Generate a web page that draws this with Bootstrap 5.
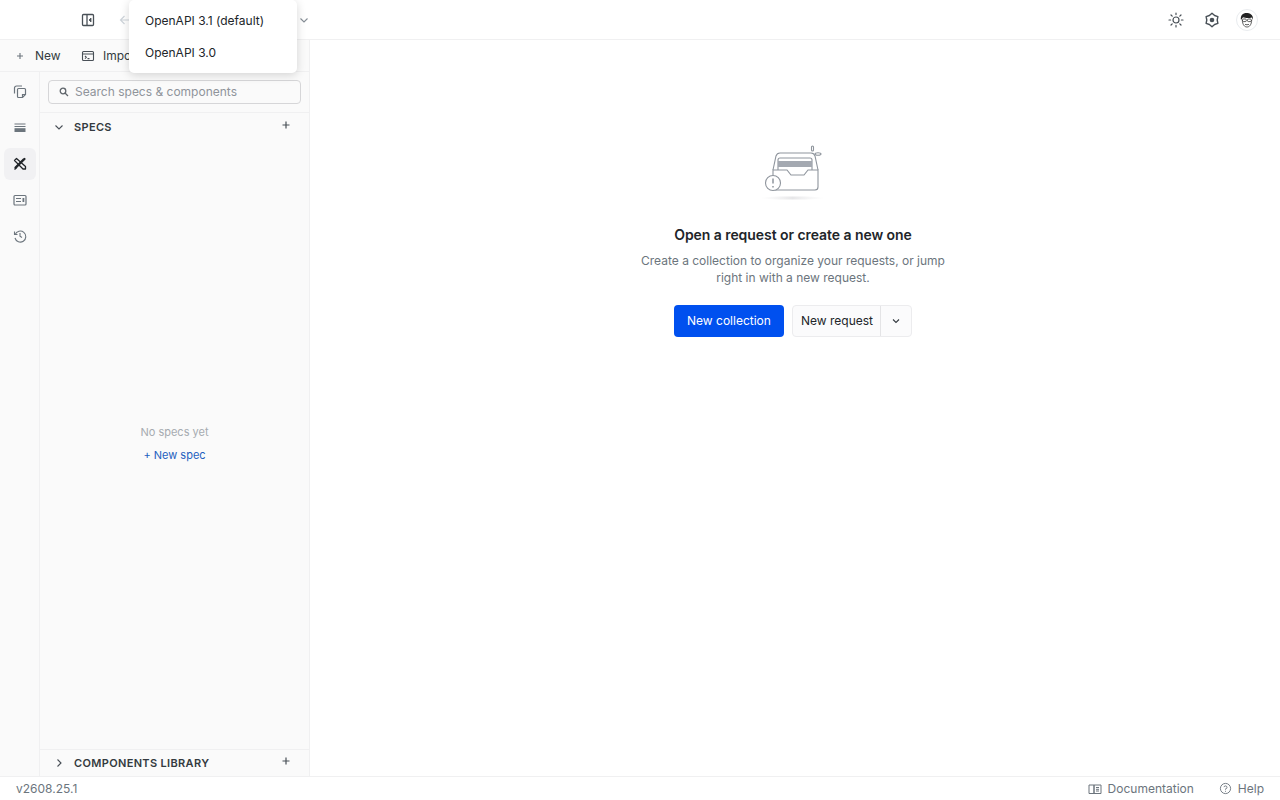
<!DOCTYPE html>
<html lang="en">
<head>
<meta charset="utf-8">
<title>Bruno</title>
<link href="https://cdn.jsdelivr.net/npm/bootstrap@5.3.0/dist/css/bootstrap.min.css" rel="stylesheet">
<style>
html,body{height:100%;overflow:hidden}
body{font-family:Inter,"Liberation Sans",sans-serif;font-size:12px;color:#343a40;background:#fff}
svg{display:block;flex:none}
.shell{height:800px}
.topbar{height:40px;border-bottom:1px solid #f0f0f1;padding-left:80px;padding-right:22px}
.ico-btn{width:16px;height:16px;color:#495057}
.back-ico{margin-left:22px;color:#ced4da}
.caret-top{margin-left:162px;color:#868e96}
.top-right{gap:20px}
.avatar{width:22px;height:22px;border-radius:50%;border:1px solid #e9ecef;background:#fff;margin-left:-4px}
.workspace{height:736px}
.sidebar{width:310px;background:#fafafa;border-right:1px solid #f0f0f1}
.quick-row{height:32px;border-bottom:1px solid #f0f0f1;padding-left:14px}
.quick-item{color:#343a40;font-size:12px}
.quick-new{gap:9px;width:67px}
.quick-import{gap:8px}
.rail{width:40px;border-right:1px solid #f0f0f1;padding-top:4px}
.rail-item{width:32px;height:32px;margin:0 0 4px 4px;border-radius:6px;color:#6c757d}
.rail-item.is-on{background:#f1f1f3;color:#212529}
.panel{min-width:0}
.search-wrap{padding:8px 8px 8px;border-bottom:1px solid #f0f0f1}
.search-box{height:24px;border:1px solid #d6d6d8;border-radius:4px;background:#fafafa;padding-left:10px;gap:6px;color:#8f949a;font-size:12px;line-height:1}
.sect-head{height:28px;padding:0 19px 0 14px;font-weight:600;font-size:11px;letter-spacing:.34px;color:#343a40}
.sect-head .sect-name{margin-left:10px;flex:1}
.sect-plus{margin-top:-4px;color:#495057}
.sect-foot{border-top:1px solid #f0f0f1;height:27px}
.empty-msg{color:#a6abb0;font-size:11px}
.new-spec{color:#1f5fbf;font-size:11px;margin-top:6px;text-decoration:none}
.empty-area{padding-bottom:3px}
.main-pane{padding-top:105px;padding-right:4px}
.hero-title{font-size:14px;font-weight:600;color:#212529;margin:20px 0 0;line-height:20px;letter-spacing:-.06px}
.hero-copy{font-size:12px;color:#6c757d;line-height:17px;margin:7px 0 0;width:320px}
.hero-btns{margin-top:19px;gap:8px}
.btn-coll{background:#0050ef;border:0;color:#fff;font-size:12px;height:32px;width:110px;padding:0;border-radius:4px}
.split-req{height:32px;border:1px solid #ececee;border-radius:4px;background:#fbfbfc;color:#212529;font-size:12px;overflow:hidden}
.split-req .req-label{padding:0 7px 0 8px;height:100%;border-right:1px solid #e4e4e6}
.split-req .req-caret{width:30px;height:100%}
.statusbar{height:24px;border-top:1px solid #f0f0f1;padding:0 16px;font-size:12px;color:#6c757d;background:#fff}
.status-links{gap:25px}
.status-link{gap:6px}
.version-menu{position:absolute;left:129px;top:0;width:168px;height:73px;background:#fff;border-radius:5px;box-shadow:0 2px 10px rgba(0,0,0,.16);padding:5px 0 4px;z-index:10;font-size:12px;color:#212529}
.version-menu .menu-line{height:32px;padding-left:16px}
</style>
</head>
<body>
<div class="shell d-flex flex-column position-relative">
  <header class="topbar d-flex align-items-center justify-content-between">
    <div class="d-flex align-items-center">
      <svg class="ico-btn" viewBox="0 0 16 16" fill="none" stroke="currentColor" stroke-width="1.300"><rect x="2.500" y="2.500" width="11" height="11" rx="1"/><path d="M7 2.500v11"/><path d="M11 6 9 8l2 2z" fill="currentColor" stroke-width=".8"/></svg>
      <svg class="ico-btn back-ico" viewBox="0 0 16 16" fill="none" stroke="currentColor" stroke-width="1.200"><path d="M13.500 8h-11M6.500 4 2.500 8l4 4"/></svg>
      <svg class="ico-btn caret-top" viewBox="0 0 16 16" fill="none" stroke="currentColor" stroke-width="1.100"><path d="m4.500 6.500 3.500 3.500 3.500-3.500"/></svg>
    </div>
    <div class="top-right d-flex align-items-center">
      <svg class="ico-btn" viewBox="0 0 16 16" fill="none" stroke="currentColor" stroke-width="1.200" stroke-linecap="round"><circle cx="8" cy="8" r="3"/><path d="M8 1v1.600M8 13.400V15M1 8h1.600M13.400 8H15M3 3l1.200 1.200M11.800 11.800 13 13M3 13l1.200-1.200M11.800 4.200 13 3"/></svg>
      <svg class="ico-btn" viewBox="0 0 16 16" fill="none" stroke="currentColor" stroke-width="1.400" stroke-linejoin="round"><path d="M8 1.200 10.600 3.500 13.900 4.600 13.200 8 13.900 11.400 10.600 12.500 8 14.800 5.400 12.500 2.100 11.400 2.800 8 2.100 4.600 5.400 3.500z"/><circle cx="8" cy="8" r="2.300" fill="currentColor" stroke="none"/></svg>
      <div class="avatar d-flex align-items-center justify-content-center">
        <svg width="18" height="18" viewBox="0 0 18 18"><path d="M3 9C2 4 5.500 1.500 9.500 2c4 .4 6 3.500 5.500 7l-1-2.500C10.500 7.500 7 7 5 6.200 4.500 7 4 8 3 9z" fill="#222"/><path d="M4.300 9c.2 4.500 2 7 4.700 7s4.500-2.500 4.700-7" fill="none" stroke="#555" stroke-width=".9"/><rect x="4.500" y="8" width="3.800" height="2.600" rx="1" fill="none" stroke="#333" stroke-width=".8"/><rect x="9.500" y="8" width="3.800" height="2.600" rx="1" fill="none" stroke="#333" stroke-width=".8"/><path d="M7 13.300c1.200.6 2.800.6 4 0" stroke="#333" fill="none" stroke-width=".8"/></svg>
      </div>
    </div>
  </header>

  <div class="workspace d-flex">
    <aside class="sidebar d-flex flex-column">
      <div class="quick-row d-flex align-items-center">
        <div class="quick-new quick-item d-flex align-items-center">
          <svg width="12" height="12" viewBox="0 0 12 12" stroke="#6c757d" stroke-width="1.100"><path d="M6 3v6M3 6h6"/></svg>
          <span>New</span>
        </div>
        <div class="quick-import quick-item d-flex align-items-center">
          <svg width="14" height="14" viewBox="0 0 14 14" fill="none" stroke="#495057" stroke-width="1.100"><rect x="1.500" y="2.500" width="11" height="9" rx="1"/><path d="M1.500 5h11M4 7l1.300 1.300L4 9.600M6.500 9.600h2"/></svg>
          <span>Import</span>
        </div>
      </div>
      <div class="d-flex flex-grow-1" style="min-height:0">
        <nav class="rail">
          <div class="rail-item d-flex align-items-center justify-content-center"><svg width="16" height="16" viewBox="0 0 16 16" fill="none" stroke="currentColor" stroke-width="1.200"><path d="M10 2H4.500A2 2 0 0 0 2.500 4v5.500"/><path d="M6.500 4.500h6a1 1 0 0 1 1 1v5l-3 3h-4a1 1 0 0 1-1-1v-7a1 1 0 0 1 1-1z"/><path d="M13.500 10.500h-3v3"/></svg></div>
          <div class="rail-item d-flex align-items-center justify-content-center"><svg width="16" height="16" viewBox="0 0 16 16" fill="currentColor"><rect x="2.500" y="3.500" width="11" height="1"/><rect x="2.500" y="6" width="11" height="1"/><rect x="2.500" y="8.200" width="11" height="3.800"/></svg></div>
          <div class="rail-item is-on d-flex align-items-center justify-content-center"><svg width="16" height="16" viewBox="0 0 16 16" fill="none" stroke="currentColor" stroke-width="1.300" stroke-linejoin="round"><path d="m4.500 2.500-2 2 8.500 8.500h2.500v-2.500z"/><path d="M3.500 12.500 12 4l1-1-.5-.5-1 .5-8.500 8.500.5.500z" fill="currentColor"/><path d="M2.500 13.500 4.500 11.500"/></svg></div>
          <div class="rail-item d-flex align-items-center justify-content-center"><svg width="16" height="16" viewBox="0 0 16 16" fill="none" stroke="currentColor" stroke-width="1.200"><rect x="2" y="3.500" width="12" height="9.500" rx="1"/><path d="M4 6.500h5M4 9.500h5"/><rect x="10.500" y="6" width="1.800" height="4" fill="currentColor" stroke="none"/></svg></div>
          <div class="rail-item d-flex align-items-center justify-content-center"><svg width="16" height="16" viewBox="0 0 16 16" fill="none" stroke="currentColor" stroke-width="1.100"><path d="M3.200 6.500A5.500 5.500 0 1 1 3 10"/><path d="M2.500 3.500v3h3M8 5v3.200l2 1.300"/></svg></div>
        </nav>
        <section class="panel flex-grow-1 d-flex flex-column">
          <div class="search-wrap">
            <div class="search-box d-flex align-items-center">
              <svg width="10" height="10" viewBox="0 0 10 10" fill="none" stroke="#5f656b" stroke-width="1.300"><circle cx="4" cy="4" r="2.800"/><path d="m6 6 3 3"/></svg>
              <span>Search specs &amp; components</span>
            </div>
          </div>
          <div class="sect-head d-flex align-items-center">
            <svg width="10" height="10" viewBox="0 0 10 10" fill="none" stroke="#495057" stroke-width="1.100"><path d="m1.500 3.500 3.500 3.500 3.500-3.500"/></svg>
            <span class="sect-name">SPECS</span>
            <svg class="sect-plus" width="8" height="8" viewBox="0 0 8 8" stroke="currentColor" stroke-width="1.200"><path d="M4 .5v7M.5 4h7"/></svg>
          </div>
          <div class="empty-area flex-grow-1 d-flex flex-column align-items-center justify-content-center">
            <div class="empty-msg">No specs yet</div>
            <a class="new-spec" href="#">+ New spec</a>
          </div>
          <div class="sect-foot sect-head d-flex align-items-center">
            <svg width="10" height="10" viewBox="0 0 10 10" fill="none" stroke="#495057" stroke-width="1.100"><path d="m3.500 1.500 3.500 3.500-3.500 3.500"/></svg>
            <span class="sect-name">COMPONENTS LIBRARY</span>
            <svg class="sect-plus" width="8" height="8" viewBox="0 0 8 8" stroke="currentColor" stroke-width="1.200"><path d="M4 .5v7M.5 4h7"/></svg>
          </div>
        </section>
      </div>
    </aside>

    <main class="main-pane flex-grow-1 d-flex flex-column align-items-center text-center">
      <svg width="72" height="60" viewBox="0 0 72 60" fill="none" stroke="#8f959d" stroke-width="1.100">
        <defs><linearGradient id="shade" x1="0" x2="1" y1="0" y2="0"><stop offset="0" stop-color="#f2f2f3" stop-opacity="0"/><stop offset=".5" stop-color="#e6e6e8"/><stop offset="1" stop-color="#f2f2f3" stop-opacity="0"/></linearGradient></defs>
        <ellipse cx="35.500" cy="53" rx="33" ry="1.500" fill="url(#shade)" stroke="none"/>
        <path d="M16 25 19 11q1-3 4-3h31q3 0 4 3l3 14"/>
        <path d="M21 25V15q0-2 2-2h30q2 0 2 2v10"/>
        <rect x="21" y="16" width="34" height="6" fill="#a4a9b1" stroke="none"/>
        <path d="M16 25h14l4 5h13l4-5h10v17q0 3-3 3H19q-3 0-3-3z" fill="#fff"/>
        <circle cx="16" cy="38" r="7.500" fill="#fff"/>
        <path d="M16 33.500v5M16 41v1.400" stroke-width="1.500"/>
        <rect x="54.500" y="1" width="2" height="5" rx="1"/>
        <ellipse cx="61" cy="9" rx="3" ry="1.200"/>
      </svg>
      <h1 class="hero-title">Open a request or create a new one</h1>
      <p class="hero-copy">Create a collection to organize your requests, or jump right in with a new request.</p>
      <div class="hero-btns d-flex">
        <button type="button" class="btn btn-coll">New collection</button>
        <div class="split-req d-flex align-items-center">
          <div class="req-label d-flex align-items-center">New request</div>
          <div class="req-caret d-flex align-items-center justify-content-center"><svg width="12" height="12" viewBox="0 0 12 12" fill="none" stroke="#343a40" stroke-width="1.100"><path d="m3 4.500 3 3 3-3"/></svg></div>
        </div>
      </div>
    </main>
  </div>

  <footer class="statusbar d-flex align-items-center justify-content-between">
    <span>v2608.25.1</span>
    <div class="status-links d-flex align-items-center">
      <div class="status-link d-flex align-items-center">
        <svg width="14" height="14" viewBox="0 0 14 14" fill="none" stroke="#6c757d" stroke-width="1"><path d="M1 3h5v8.500H1zM6 3h7v8.500H6z"/><path d="M8 5.500h3M8 7.300h3M8 9h3"/></svg>
        <span>Documentation</span>
      </div>
      <div class="status-link d-flex align-items-center">
        <svg width="13" height="13" viewBox="0 0 14 14" fill="none" stroke="#6c757d" stroke-width="1"><circle cx="7" cy="7" r="5.500"/><path d="M5.400 5.500A1.600 1.600 0 1 1 7 7.400v.8M7 9.500v1"/></svg>
        <span>Help</span>
      </div>
    </div>
  </footer>

  <div class="version-menu">
    <div class="menu-line d-flex align-items-center">OpenAPI 3.1 (default)</div>
    <div class="menu-line d-flex align-items-center">OpenAPI 3.0</div>
  </div>
</div>
<script src="https://cdn.jsdelivr.net/npm/bootstrap@5.3.0/dist/js/bootstrap.bundle.min.js"></script>
</body>
</html>
